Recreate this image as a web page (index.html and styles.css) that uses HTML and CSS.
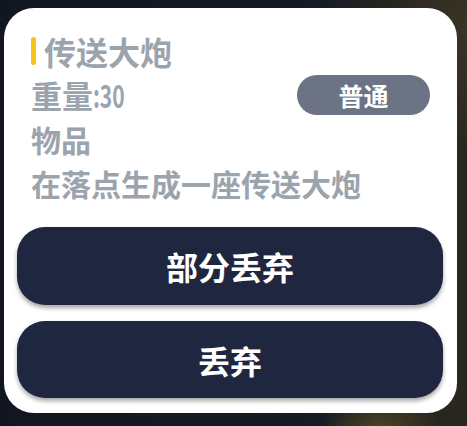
FILE: index.html
```html
<!DOCTYPE html>
<html lang="zh-CN">
<head>
  <meta charset="UTF-8">
  <meta name="viewport" content="width=device-width, initial-scale=1.0">
  <title>传送大炮</title>
  <link rel="stylesheet" href="styles.css">
</head>
<body>
  <div class="card">
    <div class="info">
      <div class="title">
        <span class="mark"></span>
        <h3>传送大炮</h3>
      </div>
      <div class="weight-row">
        <p class="weight">重量<span class="num">:30</span></p>
        <span class="badge">普通</span>
      </div>
      <p class="type">物品</p>
      <p class="desc">在落点生成一座传送大炮</p>
    </div>

    <div class="actions">
      <button class="btn first">部分丢弃</button>
      <button class="btn">丢弃</button>
    </div>
  </div>
</body>
</html>
```

FILE: styles.css
```css
html, body {
  height: 100%;
}
body {
  margin: 0;
  font-family: "Noto Sans CJK SC", "Noto Sans", sans-serif;
  background-color: #11151f;
  background-image:
    radial-gradient(ellipse 90px 120px at 470px 30px, #3a3426 0%, rgba(58, 52, 38, 0) 100%),
    radial-gradient(ellipse 60px 40px at 380px 430px, #4a4326 0%, rgba(74, 67, 38, 0) 100%),
    linear-gradient(90deg, #121620 0%, #151a26 68%, #24231f 80%, #2a271f 100%);
  overflow: hidden;
}
.card {
  box-sizing: border-box;
  width: 453px;
  height: 405px;
  margin: 8px 0 0 4px;
  padding: 21px 14px 15px 13px;
  background: #fff;
  border-radius: 30px;
  display: flex;
  flex-direction: column;
}
.info {
  padding-left: 14px;
  color: #9ba4ac;
  font-weight: 700;
}
.title {
  display: flex;
  align-items: center;
  gap: 8px;
  height: 44px;
}
.mark {
  width: 5px;
  height: 28px;
  border-radius: 3px;
  background: #f7c21b;
}
.title h3 {
  margin: 0;
  font-size: 32px;
  font-weight: 700;
  line-height: 44px;
}
.weight-row {
  display: flex;
  align-items: center;
  justify-content: space-between;
  height: 44px;
}
.weight {
  margin: 0;
  font-size: 31px;
  line-height: 44px;
}
.num {
  display: inline-block;
  transform: scaleX(0.68);
  transform-origin: left center;
}
.badge {
  width: 133px;
  height: 40px;
  margin-right: 13px;
  border-radius: 20px;
  background: #6b7384;
  color: #fff;
  font-size: 25px;
  line-height: 40px;
  text-align: center;
}
.type, .desc {
  margin: 0;
  font-size: 30px;
  line-height: 44px;
}
.actions {
  margin-top: 22px;
  display: flex;
  flex-direction: column;
  gap: 16px;
}
.btn {
  height: 77px;
  border: none;
  border-radius: 28px;
  background: #1f2740;
  color: #fff;
  font-family: "Noto Sans CJK SC", "Noto Sans", sans-serif;
  font-size: 32px;
  font-weight: 700;
  box-shadow: 0 3px 4px rgba(0, 0, 0, 0.35);
}
.btn.first {
  height: 78px;
}
```
